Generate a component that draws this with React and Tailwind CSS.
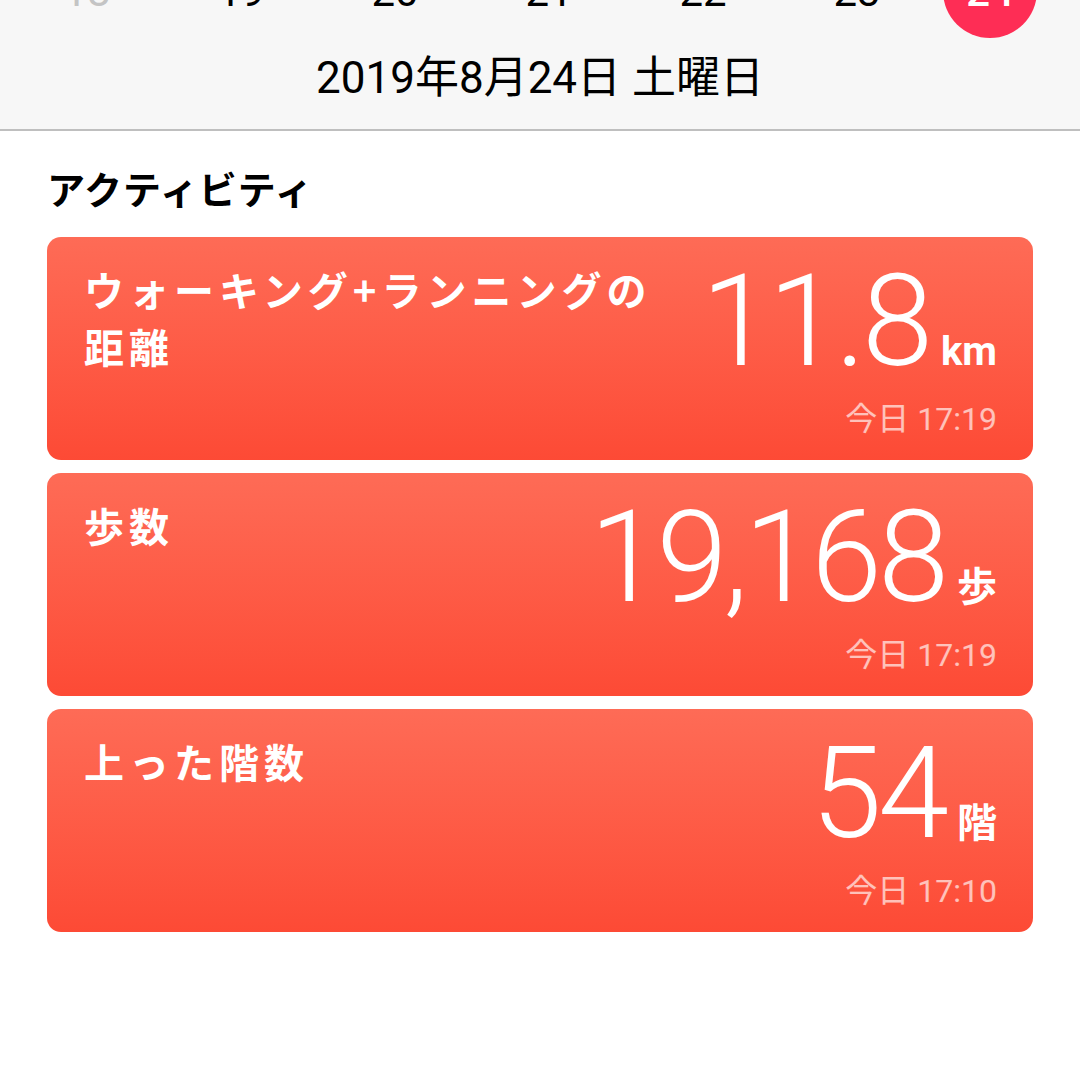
const jp = "font-['Noto_Sans_CJK_JP',sans-serif]"
const num = "font-['Roboto','Noto_Sans_CJK_JP',sans-serif]"

const days = [
  { d: 18, cls: 'text-[#c4c4c4]' },
  { d: 19, cls: 'text-black' },
  { d: 20, cls: 'text-black' },
  { d: 21, cls: 'text-black' },
  { d: 22, cls: 'text-black' },
  { d: 23, cls: 'text-black' },
]

const cards = [
  { title: ['ウォーキング+ランニングの', '距離'], value: '11.8', unit: 'km', time: '今日 17:19', unitFont: num },
  { title: ['歩数'], value: '19,168', unit: '歩', time: '今日 17:19', unitFont: jp },
  { title: ['上った階数'], value: '54', unit: '階', time: '今日 17:10', unitFont: jp },
]

function MetricCard({ title, value, unit, time, unitFont }) {
  return (
    <div className="h-[223px] rounded-[14px] flex justify-between pl-[37px] pr-[36px] bg-gradient-to-b from-[#fe6b56] to-[#fd4a35]">
      {/* title */}
      <div className={`${jp} pt-[24px] text-white font-bold text-[40px] leading-[57px] tracking-[5px]`}>
        {title.map((line) => (
          <div key={line}>{line}</div>
        ))}
      </div>

      {/* value + timestamp */}
      <div className="flex flex-col items-end pt-[20px]">
        <div className="flex items-baseline gap-[12px] text-white">
          <span className={`${num} font-light text-[128px] leading-none tracking-[-4px]`}>{value}</span>
          <span className={`${unitFont} font-bold text-[40px] leading-none`}>{unit}</span>
        </div>
        <div className={`${num} mt-[18px] text-white/65 text-[32px] leading-none`}>{time}</div>
      </div>
    </div>
  )
}

export default function App() {
  return (
    <div className="w-[1080px] h-[1080px] bg-white overflow-hidden">
      {/* header */}
      <div className="h-[131px] bg-[#f7f7f7] border-b-2 border-[#bfbfbf] flex flex-col overflow-hidden">
        <div className={`${num} -mt-[56px] flex items-center pl-[10px] text-[42px]`}>
          {days.map(({ d, cls }) => (
            <div key={d} className={`w-[154px] h-[94px] flex items-center justify-center ${cls}`}>{d}</div>
          ))}
          <div className="ml-[9px] w-[94px] h-[94px] rounded-full bg-[#fe2d55] flex items-center justify-center text-white font-medium">
            24
          </div>
        </div>
        <div className={`${num} mt-[13px] text-center text-[44px] text-black leading-tight`}>
          2019年8月24日 土曜日
        </div>
      </div>

      {/* section title */}
      <div className={`${jp} pl-[47px] pt-[33px] pb-[25px] text-[38px] font-bold leading-[48px] tracking-[1px] text-black`}>
        アクティビティ
      </div>

      <div className="mx-[47px] flex flex-col gap-[13px]">
        {cards.map((c) => (
          <MetricCard key={c.value} {...c} />
        ))}
      </div>
    </div>
  )
}
